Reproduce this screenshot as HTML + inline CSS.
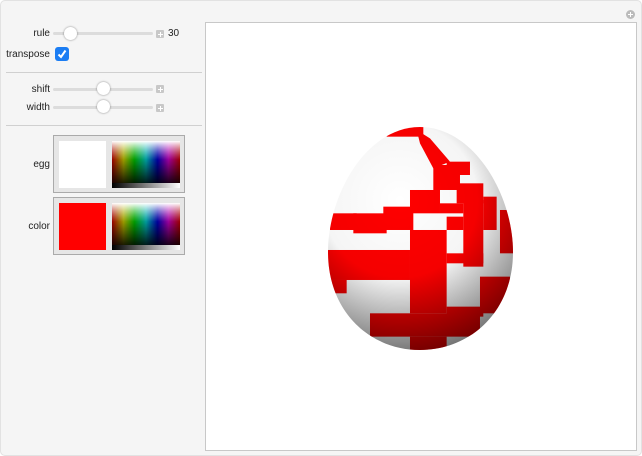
<!DOCTYPE html>
<html><head><style>
body{margin:0;width:642px;height:456px;background:#fff;font-family:"Liberation Sans",sans-serif;font-size:10px;color:#222;overflow:hidden}
#frame{position:absolute;left:0;top:0;width:640px;height:454px;border:1px solid #e2e2e2;border-radius:5px;background:#f5f5f5}
.lbl{position:absolute;text-align:right;width:50px;left:0}
.track{position:absolute;left:53px;width:100px;height:3px;background:#dcdcdc;border-radius:2px}
.thumb{position:absolute;width:13px;height:13px;border-radius:50%;background:#fff;box-shadow:0 0 2px rgba(0,0,0,.45)}
.plus{position:absolute;left:156px;width:8px;height:8px;background:#c8c8c8;border-radius:1px}
.plus:before{content:"";position:absolute;left:3.5px;top:1.5px;width:1px;height:5px;background:#fff}
.plus:after{content:"";position:absolute;left:1.5px;top:3.5px;width:5px;height:1px;background:#fff}
.sep{position:absolute;left:6px;width:196px;height:1px;background:#d0d0d0}
.cbox{position:absolute;left:53px;width:130px;height:56px;border:1px solid #aaa;background:#e6e6e6}
.sw{position:absolute;left:5px;top:5px;width:47px;height:47px}
.grad{position:absolute;left:58px;top:5px;width:68px;height:47px;background:linear-gradient(to bottom,rgba(0,0,0,0),#000),linear-gradient(to bottom,#fff,rgba(255,255,255,0) 40%),linear-gradient(to right,#f00,#ff0 17%,#0f0 33%,#0ff 50%,#00f 67%,#f0f 83%,#f00)}
.grad:after{content:"";position:absolute;left:0;bottom:0;width:68px;height:5px;background:linear-gradient(to right,#000,#fff)}
</style></head><body>
<div id="frame"></div>
<div style="position:absolute;left:626px;top:10px;width:9px;height:9px;border-radius:50%;background:#bbb"></div>
<div style="position:absolute;left:630px;top:12px;width:1px;height:5px;background:#fff"></div>
<div style="position:absolute;left:628px;top:14px;width:5px;height:1px;background:#fff"></div>

<div class="lbl" style="top:28px">rule</div>
<div class="track" style="top:32px"></div>
<div class="thumb" style="left:64px;top:27px"></div>
<div class="plus" style="top:30px"></div>
<div style="position:absolute;left:168px;top:28px">30</div>
<div class="lbl" style="top:49px">transpose</div>
<div style="position:absolute;left:55px;top:47px;width:14px;height:14px;border-radius:3px;background:#1b7df3"></div>
<svg style="position:absolute;left:55px;top:47px" width="14" height="14"><path d="M3.5 7.5 L6 10 L10.5 3.5" stroke="#fff" stroke-width="2" fill="none"/></svg>
<div class="sep" style="top:72px"></div>
<div class="lbl" style="top:84px">shift</div>
<div class="track" style="top:88px"></div>
<div class="thumb" style="left:97px;top:82px"></div>
<div class="plus" style="top:85px"></div>
<div class="lbl" style="top:102px">width</div>
<div class="track" style="top:106px"></div>
<div class="thumb" style="left:97px;top:100px"></div>
<div class="plus" style="top:104px"></div>
<div class="sep" style="top:125px"></div>
<div class="lbl" style="top:159px">egg</div>
<div class="cbox" style="top:135px"><div class="sw" style="background:#fff"></div><div class="grad"></div></div>
<div class="lbl" style="top:221px">color</div>
<div class="cbox" style="top:197px"><div class="sw" style="background:#f00"></div><div class="grad"></div></div>

<div style="position:absolute;left:205px;top:22px;width:430px;height:427px;background:#fff;border:1px solid #c8c8c8"></div>
<svg style="position:absolute;left:0;top:0" width="642" height="456">
<defs>
<clipPath id="eg"><path d="M420 127 C474 127 513 195 513 252 C513 312 470 350 420 350 C370 350 328 312 328 252 C328 195 366 127 420 127Z"/></clipPath>
<radialGradient id="sh" cx="400" cy="200" r="155" gradientUnits="userSpaceOnUse">
<stop offset="0" stop-color="#000" stop-opacity="0"/><stop offset="0.5" stop-color="#000" stop-opacity="0.04"/><stop offset="1" stop-color="#000" stop-opacity="0.55"/></radialGradient>
</defs>
<g clip-path="url(#eg)">
<rect x="320" y="120" width="200" height="240" fill="#fff"/>
<g fill="#f00" transform="translate(320,120) scale(0.3333)">
<rect x="200" y="20" width="110" height="30"/>
<path d="M290 30 L330 55 L390 125 L340 145 L300 70Z"/>
<rect x="340" y="135" width="80" height="75"/>
<rect x="380" y="125" width="70" height="40"/>
<rect x="410" y="190" width="80" height="60"/>
<rect x="270" y="210" width="90" height="70"/>
<rect x="190" y="260" width="90" height="70"/>
<rect x="100" y="280" width="100" height="60"/>
<rect x="30" y="280" width="80" height="50"/>
<rect x="360" y="250" width="70" height="30"/>
<rect x="430" y="240" width="60" height="200"/>
<rect x="490" y="230" width="40" height="100"/>
<rect x="540" y="270" width="60" height="130"/>
<rect x="270" y="330" width="110" height="250"/>
<rect x="380" y="290" width="50" height="40"/>
<rect x="20" y="390" width="250" height="90"/>
<rect x="20" y="480" width="60" height="40"/>
<rect x="380" y="400" width="110" height="30"/>
<rect x="480" y="470" width="90" height="110"/>
<rect x="150" y="580" width="330" height="70"/>
<rect x="270" y="650" width="110" height="60"/>
<rect x="380" y="560" width="110" height="30"/>
</g>
<rect x="320" y="120" width="200" height="240" fill="url(#sh)"/>
</g>
</svg>
</body></html>
